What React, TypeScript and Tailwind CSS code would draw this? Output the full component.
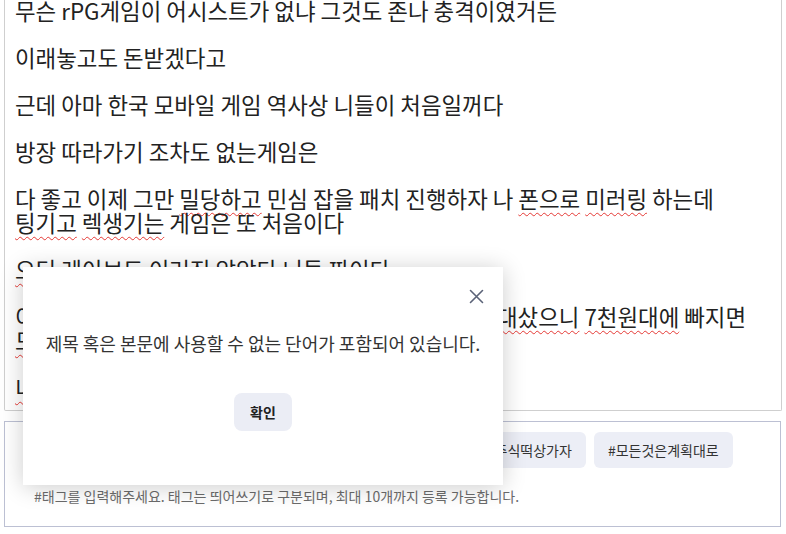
import React from "react";

const W = "underline decoration-wavy decoration-[#e53935] decoration-1 underline-offset-[4px]";

function P({ children }: { children: React.ReactNode }) {
  return <p className="m-0 mb-[23px] leading-[24px]">{children}</p>;
}

export default function App() {
  const tags = ["#리니지라이크", "#과금유도", "#운영진각성해라", "#환불", "#주식떡상가자", "#모든것은계획대로"];
  return (
    <div
      className="relative w-[786px] h-[534px] overflow-hidden bg-white"
      style={{ fontFamily: '"Noto Sans CJK KR", "Noto Sans", sans-serif' }}
    >
      {/* editor */}
      <div className="ml-[4px] w-[778px] h-[411px] border-x border-b border-[#cfcfcf] rounded-b-[2px] pl-[10px] overflow-hidden">
        <div className="-mt-[2px] text-[22.4px] text-[#222] whitespace-nowrap">
          <P>무슨 rPG게임이 어시스트가 없냐 그것도 존나 충격이였거든</P>
          <P>이래놓고도 돈받겠다고</P>
          <P>근데 아마 한국 모바일 게임 역사상 니들이 처음일꺼다</P>
          <P>방장 따라가기 조차도 없는게임은</P>
          <P>
            다 좋고 이제 그만 <span className={W}>밀당하고</span> 민심 잡을 패치 진행하자 나 <span className={W}>폰으로</span>{" "}
            <span className={W}>미러링</span> 하는데
            <br />
            <span className={W}>팅기고</span> <span className={W}>렉생기는</span> 게임은 또 처음이다
          </P>
          <P>
            <span className={W}>오딘</span> 레이브도 이러진 않았다 니들 짜이다
          </P>
          <P>
            이 오픈 전부터 게임 하나 믿고 회사 주식을 2만 5천원<span className={W}>대샀으니</span>{" "}
            <span className={W}>7천원대에</span> 빠지면
            <br />
            <span className={W}>도망가나</span> 보자
          </P>
          <P>
            <span className={W}>니네</span> 진짜 정신 차려라
          </P>
        </div>
      </div>

      {/* tag box */}
      <div className="ml-[4px] mt-[10px] w-[777px] h-[106px] border border-[#bcc0d3] pl-[29px] pt-[10px]">
        <div className="ml-[19px] flex gap-[8px] flex-nowrap">
          {tags.map((t) => (
            <div
              key={t}
              className="shrink-0 h-[36px] px-[14px] flex items-center rounded-[6px] bg-[#eceef6] text-[14px] text-[#333]"
            >
              {t}
            </div>
          ))}
        </div>
        <div className="mt-[19px] text-[14px] leading-[18px] text-[#6b6b6b]">
          #태그를 입력해주세요. 태그는 띄어쓰기로 구분되며, 최대 10개까지 등록 가능합니다.
        </div>
      </div>

      {/* modal */}
      <div className="absolute left-[23px] top-[267px] w-[480px] h-[218px] bg-white shadow-[0_2px_22px_rgba(0,0,0,0.2)] flex flex-col items-center pt-[64px]">
        <button className="absolute right-[19px] top-[22px] w-[15px] h-[15px] flex items-center justify-center">
          <svg width="15" height="15" viewBox="0 0 15 15" fill="none">
            <path d="M1.5 1.5 L13.5 13.5 M13.5 1.5 L1.5 13.5" stroke="#5b6378" strokeWidth="1.6" strokeLinecap="round" />
          </svg>
        </button>
        <div className="text-[18px] leading-[24px] text-[#333]">제목 혹은 본문에 사용할 수 없는 단어가 포함되어 있습니다.</div>
        <button className="mt-[38px] w-[58px] h-[38px] rounded-[8px] bg-[#ebedf5] text-[14px] font-bold text-[#222]">
          확인
        </button>
      </div>
    </div>
  );
}
